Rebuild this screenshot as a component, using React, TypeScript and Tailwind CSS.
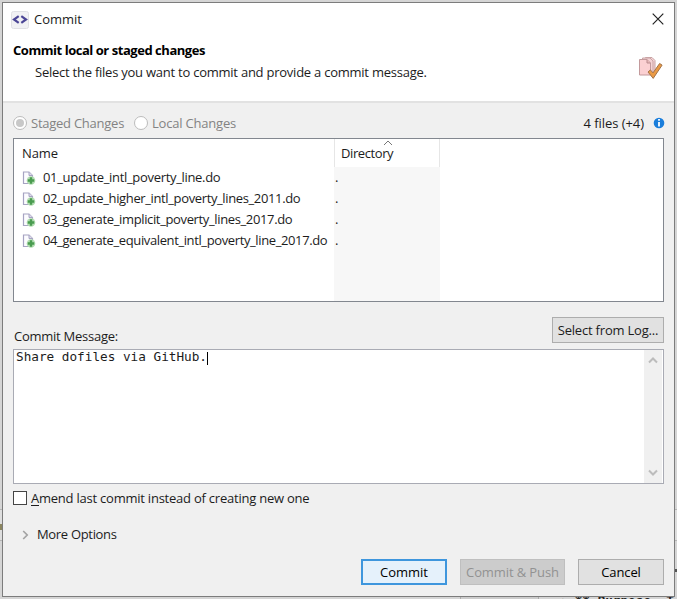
import React from "react";

function FileIcon() {
  return (
    <svg width="14" height="16" viewBox="0 0 14 16" className="shrink-0">
      <path d="M1.500 2h5.500l3.500 3.500v8h-9z" fill="#fcfcff" stroke="#a6a3c2" strokeWidth="1.200" />
      <path d="M7 2v3.500h3.500" fill="#dedbea" stroke="#a6a3c2" strokeWidth="1" />
      <circle cx="9" cy="10.500" r="4.300" fill="#b4ddb3" />
      <path d="M9 7.300v6.400M5.800 10.500h6.400" stroke="#4a9c50" strokeWidth="2.400" />
    </svg>
  );
}

function CommitIcon() {
  return (
    <svg width="26" height="26" viewBox="0 0 26 26" className="shrink-0">
      <path d="M7.500 2.500h6.500l3 3v13h-9.500z" fill="#f5d3d4" stroke="#c9a4a5" />
      <path d="M4.500 3h7.500l3 3v13h-10.500z" fill="#f5d3d4" stroke="#c9a4a5" />
      <path d="M1.500 4.500h7.500l3.500 3.500v12h-11z" fill="#fbd0d2" stroke="#c39a9c" />
      <path d="M9 4.500v3.500h3.500" fill="#e9b8ba" stroke="#b98c8e" />
      <path d="M10 17l2.400-2.100 2.600 3 6.600-9.400 2.500 1.600-8.900 13.300z" fill="#eb9b45" stroke="#a37349" strokeWidth="1" />
    </svg>
  );
}

const files = [
  { name: "01_update_intl_poverty_line.do", tracking: "tracking-[-0.32px]" },
  { name: "02_update_higher_intl_poverty_lines_2011.do", tracking: "tracking-[-0.37px]" },
  { name: "03_generate_implicit_poverty_lines_2017.do", tracking: "tracking-[-0.36px]" },
  { name: "04_generate_equivalent_intl_poverty_line_2017.do", tracking: "tracking-[-0.38px]" },
];

export default function App() {
  return (
    <div className="relative h-[599px] w-[677px] overflow-hidden bg-[#d5d5d5] pt-[2px] pl-[2px] font-['Open_Sans','Noto_Sans',sans-serif] text-[13px] leading-[18px] tracking-[-0.32px] whitespace-nowrap text-[#1c1c1c]">
      <div className="absolute top-[509px] left-0 h-8 w-[677px] border-y border-[#b5b5b5] bg-[#dedede]" />
      <div className="absolute top-[524px] left-0 h-[6px] w-[2px] bg-[#8b855f]" />
      <div className="absolute top-[569px] left-[675px] h-[3px] w-[2px] bg-[#555]" />
      <div className="absolute top-[597px] left-[460px] h-[2px] w-[79px] border-x border-[#aaa] bg-[#ccc]" />
      <div className="absolute top-[594px] left-[560px] flex gap-[7px] font-['DejaVu_Sans_Mono',monospace] text-[12.7px] leading-[14px] font-bold tracking-normal whitespace-pre text-[#222]">
        <span className="font-normal">›</span>
        <span>** Purpose  T</span>
      </div>

      <div className="relative flex h-[595px] w-[673px] flex-col border border-[#7c7c7c] bg-[#f0f0f0]">
        <header className="h-[100px] shrink-0 border-b-2 border-[#e2e2e2] bg-white">
          <div className="flex h-[33px] items-center pl-[8px]">
            <svg width="19" height="18" viewBox="0 0 19 18">
              <rect x="0.500" y="0.500" width="17" height="17" rx="2" fill="#f1f1f4" stroke="#e0e0e4" />
              <path d="M7.700 5.200L3 8.500l4.700 3.300M10.300 5.200L15 8.500l-4.700 3.300" fill="none" stroke="#4b4596" strokeWidth="2.200" />
            </svg>
            <span className="-mt-[2px] ml-[4px] tracking-[0px]">Commit</span>
            <svg className="-mt-[2px] mr-[10px] ml-auto" width="12" height="12" viewBox="0 0 12 12">
              <path d="M.7.700l10.600 10.600M11.300.7L.7 11.300" stroke="#222" strokeWidth="1.200" />
            </svg>
          </div>
          <div className="flex justify-between pr-[10px] pl-[10px]">
            <div className="pt-[5px]">
              <h1 className="h-[22px] text-[13px] font-bold tracking-[-0.46px] text-black">Commit local or staged changes</h1>
              <p className="pl-[22px] tracking-[-0.24px]">Select the files you want to commit and provide a commit message.</p>
            </div>
            <div className="pt-[19px]"><CommitIcon /></div>
          </div>
        </header>

        <main className="flex flex-col pr-[10px] pl-[10px]">
          <div className="flex h-[35px] items-center pt-[5px] text-[#838383]">
            <span className="flex size-[14px] items-center justify-center rounded-full border border-[#bcbcbc] bg-white">
              <span className="size-[8px] rounded-full bg-[#c8c8c8]" />
            </span>
            <span className="ml-[4px] w-[103px] tracking-[-0.25px]">Staged Changes</span>
            <span className="size-[14px] rounded-full border border-[#bcbcbc] bg-white" />
            <span className="ml-[4px] tracking-[-0.2px]">Local Changes</span>
            <span className="ml-auto tracking-[-0.05px] text-[#1c1c1c]">4 files (+4)</span>
            <svg className="-mr-px ml-[9px]" width="12" height="12" viewBox="0 0 12 12">
              <circle cx="6" cy="6" r="5.300" fill="#1b7edb" />
              <path d="M6 2v1.800M6 5v4.500" stroke="#fff" strokeWidth="1.800" />
            </svg>
          </div>

          <div className="flex h-[164px] border border-[#82878f] bg-white">
            <div className="w-[320px] pl-[8px]">
              <div className="flex h-[28px] items-center tracking-[-0.1px]">Name</div>
              {files.map((f) => (
                <div key={f.name} className="flex h-[21px] items-center">
                  <FileIcon />
                  <span className={"-mt-[2px] ml-[7px] " + f.tracking}>{f.name}</span>
                </div>
              ))}
            </div>
            <div className="w-[106px] bg-[#f7f7f7]">
              <div className="relative flex h-[28px] items-center border-x border-[#e6e6e6] bg-white pl-[6px] tracking-[-0.4px]">
                Directory
                <svg className="absolute top-[1px] left-[48px]" width="10" height="6" viewBox="0 0 10 6">
                  <path d="M1 5l4-4 4 4" fill="none" stroke="#777" />
                </svg>
              </div>
              {files.map((f) => (
                <div key={f.name} className="flex h-[21px] items-center pb-[2px] pl-[1px]">.</div>
              ))}
            </div>
          </div>

          <div className="flex h-[47px] pt-[15px]">
            <span className="mt-[10px] ml-px tracking-[-0.25px]">Commit Message:</span>
            <button className="ml-auto h-[26px] w-[112px] border border-[#adadad] bg-[#e1e1e1] pb-px tracking-[-0.2px]">Select from Log...</button>
          </div>

          <div className="flex h-[135px] justify-between border border-[#a9abb4] bg-white">
            <div className="flex h-[15px] pl-[2px] font-['DejaVu_Sans_Mono',monospace] text-[12.700px] leading-[14px] tracking-normal">
              Share dofiles via GitHub.
              <span className="mt-[2px] h-[13px] w-px bg-black" />
            </div>
            <div className="flex w-[19px] flex-col items-center justify-between border-r border-white bg-[#f0f0f0] py-[7px]">
              <svg width="10" height="7" viewBox="0 0 10 7"><path d="M1 5.500l4-4 4 4" fill="none" stroke="#bcbcbc" strokeWidth="2" /></svg>
              <svg width="10" height="7" viewBox="0 0 10 7"><path d="M1 1.500l4 4 4-4" fill="none" stroke="#bcbcbc" strokeWidth="2" /></svg>
            </div>
          </div>

          <div className="mt-[5px] flex h-[18px] items-center">
            <span className="size-[14px] border border-[#444] bg-white" />
            <span className="ml-[4px] tracking-[-0.23px]"><span className="underline underline-offset-2">A</span>mend last commit instead of creating new one</span>
          </div>
          <div className="mt-[18px] flex h-[18px] items-center pl-[9px]">
            <svg className="mt-[2px]" width="7" height="10" viewBox="0 0 7 10"><path d="M1.200 1l4 4-4 4" fill="none" stroke="#a3a3a3" strokeWidth="1.700" /></svg>
            <span className="ml-[8px]">More Options</span>
          </div>
          <div className="mt-[16px] flex h-[26px] justify-end">
            <button className="w-[86px] border-2 border-[#3e96dd] bg-[#e5f1fb] tracking-[0px] text-black">Commit</button>
            <button className="ml-[13px] w-[105px] border border-[#bfbfbf] bg-[#cccccc] tracking-[-0.1px] text-[#929292]">Commit &amp; Push</button>
            <button className="ml-[13px] w-[86px] border border-[#adadad] bg-[#e1e1e1] tracking-[-0.1px] text-black">Cancel</button>
          </div>
        </main>
      </div>
    </div>
  );
}
